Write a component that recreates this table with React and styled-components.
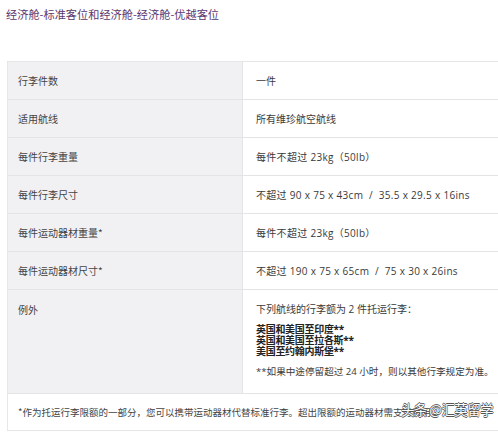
import React from 'react';
import styled, { createGlobalStyle } from 'styled-components';

const GlobalStyle = createGlobalStyle`
  body {
    margin: 0;
    background: #ffffff;
    font-family: "Open Sans", "Noto Sans CJK SC", sans-serif;
    color: #3a3a3c;
  }
`;

const Page = styled.div`
  position: relative;
  width: 498px;
  height: 435px;
  overflow: hidden;
  background: #fff;
`;

const Title = styled.h1`
  margin: 0;
  padding: 5px 0 0 6px;
  height: 56px;
  box-sizing: border-box;
  font-family: "Noto Sans CJK SC", sans-serif;
  font-size: 11.2px;
  font-weight: 400;
  line-height: 18px;
  color: #5b3770;
`;

const Table = styled.div`
  margin: 5px 0 0 7px;
  display: grid;
  grid-template-columns: 235px 1fr;
  border-top: 1px solid #e6e6e8;
  border-left: 1px solid #e6e6e8;
  border-bottom: 1px solid #e6e6e8;
`;

const Label = styled.div`
  box-sizing: border-box;
  height: ${(p) => p.h || 38}px;
  padding: ${(p) => (p.top ? '12px 10px 0' : '0 10px')};
  display: flex;
  align-items: ${(p) => (p.top ? 'flex-start' : 'center')};
  background: #f1f1f3;
  border-bottom: 1px solid #e4e4e6;
  border-right: 1px solid #e4e4e6;
  font-family: "Noto Sans CJK SC", sans-serif;
  font-size: 10px;
  color: #444;
`;

const Value = styled.div`
  box-sizing: border-box;
  height: ${(p) => p.h || 38}px;
  padding: ${(p) => (p.top ? '12px 13px 0' : '0 13px')};
  display: flex;
  flex-direction: column;
  justify-content: ${(p) => (p.top ? 'flex-start' : 'center')};
  border-bottom: 1px solid #e4e4e6;
  font-size: 10px;
  color: #3a3a3a;
  white-space: pre;
`;

const Line = styled.div`
  line-height: ${(p) => p.lh || 14}px;
  font-weight: ${(p) => (p.bold ? 700 : 400)};
  font-size: ${(p) => p.fs || 10}px;
  margin-top: ${(p) => p.mt || 0}px;
  color: ${(p) => (p.bold ? '#222' : 'inherit')};
  letter-spacing: ${(p) => (p.bold ? '-0.3px' : p.wide ? '0.3px' : '0')};
`;

const Footer = styled.div`
  grid-column: 1 / span 2;
  box-sizing: border-box;
  height: 36px;
  padding: 0 10px;
  display: flex;
  align-items: center;
  font-family: "Noto Sans CJK SC", sans-serif;
  font-size: 9.5px;
  color: #444;
  white-space: nowrap;
  overflow: hidden;
`;

const Watermark = styled.div`
  position: absolute;
  left: 401px;
  top: 400px;
  font-family: "Noto Sans CJK SC", sans-serif;
  font-size: 13.5px;
  line-height: 18px;
  color: #ffffff;
  letter-spacing: -0.6px;
  text-shadow: 0.6px 0 0 #555, -0.6px 0 0 #555, 0 0.6px 0 #555, 0 -0.6px 0 #555;
`;

const rows = [
  ['行李件数', '一件'],
  ['适用航线', '所有维珍航空航线'],
  ['每件行李重量', '每件不超过 23kg（50lb）', true],
  ['每件行李尺寸', '不超过 90 x 75 x 43cm  /  35.5 x 29.5 x 16ins', true],
  ['每件运动器材重量*', '每件不超过 23kg（50lb）', true],
  ['每件运动器材尺寸*', '不超过 190 x 75 x 65cm  /  75 x 30 x 26ins', true],
];

export default function App() {
  return (
    <Page>
      <GlobalStyle />
      <Title>经济舱-标准客位和经济舱-经济舱-优越客位</Title>
      <Table>
        {rows.map(([k, v, wide]) => (
          <React.Fragment key={k}>
            <Label>{k}</Label>
            <Value>
              <Line wide={wide}>{v}</Line>
            </Value>
          </React.Fragment>
        ))}
        <Label h={104} top>例外</Label>
        <Value h={104} top>
          <Line>下列航线的行李额为 2 件托运行李：</Line>
          <Line bold lh={11} mt={8}>英国和美国至印度**</Line>
          <Line bold lh={11}>英国和美国至拉各斯**</Line>
          <Line bold lh={11}>美国至约翰内斯堡**</Line>
          <Line mt={8} fs={9.6}>**如果中途停留超过 24 小时，则以其他行李规定为准。</Line>
        </Value>
        <Footer>*作为托运行李限额的一部分，您可以携带运动器材代替标准行李。超出限额的运动器材需支付费用。</Footer>
      </Table>
      <Watermark>头条 @汇英留学</Watermark>
    </Page>
  );
}
